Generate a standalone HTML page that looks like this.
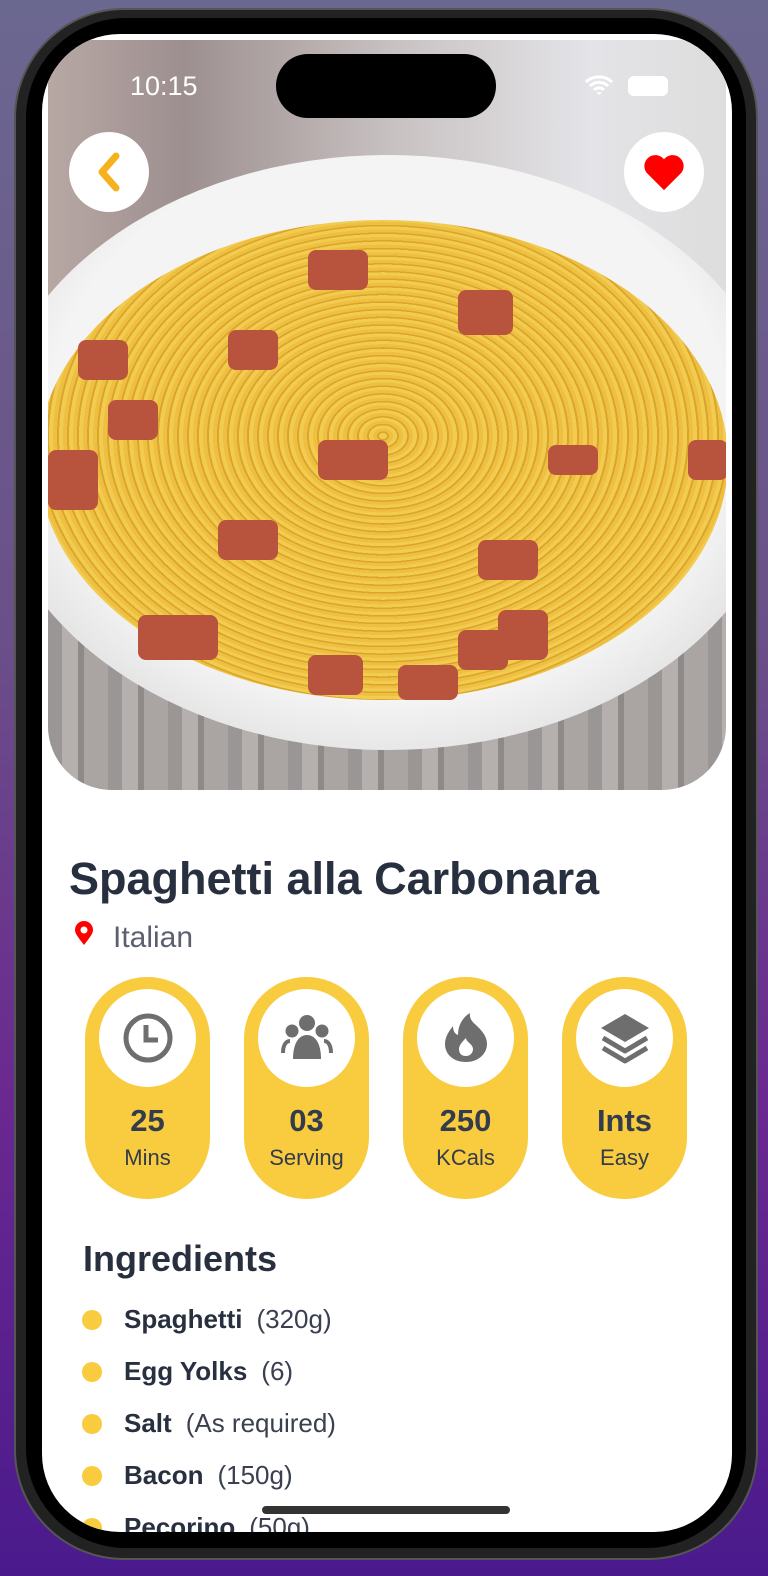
<!DOCTYPE html>
<html><head><style>
*{margin:0;padding:0;box-sizing:border-box}
body{width:768px;height:1576px;overflow:hidden;background:linear-gradient(180deg,#6b6890 0%,#6a5088 40%,#6a2890 70%,#4a1a8c 100%);font-family:"Liberation Sans",sans-serif;position:relative}
.frame{position:absolute;left:14px;top:8px;width:744px;height:1552px;border-radius:110px;background:#222;border:2px solid #555}
.bezel{position:absolute;left:26px;top:18px;width:720px;height:1530px;border-radius:100px;background:#000}
.screen{position:absolute;left:42px;top:34px;width:690px;height:1498px;border-radius:78px;background:#fff;overflow:hidden}
.photo{position:absolute;left:6px;top:6px;width:678px;height:750px;border-radius:0 0 64px 64px;overflow:hidden;
background:linear-gradient(90deg,#b8a8a4 0%,#9d8f90 20%,#c7c0c0 50%,#e4e4e8 80%,#ddd 100%)}
.wood{position:absolute;left:0;top:560px;width:100%;height:200px;background:repeating-linear-gradient(90deg,#9b9696 0 14px,#b5b0ae 14px 30px,#8e8a8a 30px 36px,#aaa5a3 36px 60px)}
.plate{position:absolute;left:-60px;top:115px;width:800px;height:595px;border-radius:50%;background:radial-gradient(ellipse at 50% 45%,#f4f4f4 60%,#dcdcdc 80%,#c8c8c8 100%)}
.pasta{position:absolute;left:-10px;top:180px;width:690px;height:480px;border-radius:50%;background:repeating-radial-gradient(ellipse at 50% 45%,#f2cc50 0 4px,#dba52c 4px 6px,#eebf40 6px 10px)}
.b{position:absolute;border-radius:8px;background:#b8533e}
.status{position:absolute;top:37px;left:88px;color:#fff;font-size:27px}
.island{position:absolute;left:234px;top:20px;width:220px;height:64px;border-radius:32px;background:#000}
.btn{position:absolute;top:98px;width:80px;height:80px;border-radius:50%;background:#fff;display:flex;align-items:center;justify-content:center}
h1{position:absolute;left:27px;top:819px;font-size:45px;font-weight:bold;color:#283040}
.loc{position:absolute;left:71px;top:887px;font-size:30px;color:#5a6070}
.pill{position:absolute;top:943px;width:125px;height:222px;border-radius:62px;background:#f9cb3e;text-align:center;color:#333c4c}
.circ{width:97px;height:98px;border-radius:50%;background:#fff;margin:12px auto 0;display:flex;align-items:center;justify-content:center}
.num{font-size:31px;font-weight:bold;margin-top:16px}
.lab{font-size:22px;margin-top:6px}
h2{position:absolute;left:41px;top:1204px;font-size:36px;font-weight:bold;color:#283040}
.ing{position:absolute;left:40px;font-size:26px;color:#283040}
.ing:before{content:"";position:absolute;left:0;top:6px;width:20px;height:20px;border-radius:50%;background:#f9cb3e}
.ing b{margin-left:42px;margin-right:14px}
.ing span{color:#3a4050}
.home{position:absolute;left:220px;top:1472px;width:248px;height:8px;border-radius:4px;background:#333}
</style></head><body>
<div class="frame"></div><div class="bezel"></div>
<div class="screen">
 <div class="photo">
  <div class="wood"></div>
  <div class="plate"></div>
  <div class="pasta"></div>
  <div class="b" style="left:30px;top:300px;width:50px;height:40px"></div>
  <div class="b" style="left:60px;top:360px;width:50px;height:40px"></div>
  <div class="b" style="left:0px;top:410px;width:50px;height:60px"></div>
  <div class="b" style="left:170px;top:480px;width:60px;height:40px"></div>
  <div class="b" style="left:90px;top:575px;width:80px;height:45px"></div>
  <div class="b" style="left:260px;top:210px;width:60px;height:40px"></div>
  <div class="b" style="left:180px;top:290px;width:50px;height:40px"></div>
  <div class="b" style="left:270px;top:400px;width:70px;height:40px"></div>
  <div class="b" style="left:430px;top:500px;width:60px;height:40px"></div>
  <div class="b" style="left:450px;top:570px;width:50px;height:50px"></div>
  <div class="b" style="left:350px;top:625px;width:60px;height:35px"></div>
  <div class="b" style="left:260px;top:615px;width:55px;height:40px"></div>
  <div class="b" style="left:410px;top:250px;width:55px;height:45px"></div>
  <div class="b" style="left:500px;top:405px;width:50px;height:30px"></div>
  <div class="b" style="left:640px;top:400px;width:40px;height:40px"></div>
  <div class="b" style="left:410px;top:590px;width:50px;height:40px"></div>
 </div>
 <div class="status">10:15</div>
 <div class="island"></div>
 <svg style="position:absolute;left:542px;top:40px" width="30" height="22" viewBox="0 0 30 22"><path d="M2 8a19 19 0 0 1 26 0M6 12a13 13 0 0 1 18 0M10 16a7 7 0 0 1 10 0" stroke="#fff" stroke-width="3" fill="none"/><path d="M12 18l3 3 3-3z" fill="#fff"/></svg>
 <div style="position:absolute;left:586px;top:42px;width:40px;height:20px;border-radius:6px;background:#fff"></div>
 <div class="btn" style="left:27px"><svg width="30" height="44" viewBox="0 0 30 44"><path d="M22 6L8 22l14 16" stroke="#f6b21c" stroke-width="7" fill="none" stroke-linecap="round" stroke-linejoin="round"/></svg></div>
 <div class="btn" style="left:582px"><svg width="44" height="40" viewBox="0 0 24 22"><path d="M12 21L2.5 11.5A5.5 5.5 0 0 1 12 4a5.5 5.5 0 0 1 9.5 7.5z" fill="#f00"/></svg></div>
 <h1>Spaghetti alla Carbonara</h1>
 <svg style="position:absolute;left:31px;top:886px" width="22" height="26" viewBox="0 0 22 26"><path d="M11 25C4 16 2 13 2 10a9 9 0 0 1 18 0c0 3-2 6-9 15z" fill="#f00"/><circle cx="11" cy="10" r="3.5" fill="#fff"/></svg>
 <div class="loc">Italian</div>
 <div class="pill" style="left:43px"><div class="circ"><svg width="52" height="52" viewBox="0 0 52 52"><circle cx="26" cy="26" r="22" stroke="#6e6e6e" stroke-width="5" fill="none"/><path d="M24 13v15h12" stroke="#6e6e6e" stroke-width="5" fill="none"/></svg></div><div class="num">25</div><div class="lab">Mins</div></div>
 <div class="pill" style="left:202px"><div class="circ"><svg width="54" height="50" viewBox="0 0 54 50"><circle cx="27" cy="10" r="8" fill="#6e6e6e"/><circle cx="12" cy="18" r="6.5" fill="#6e6e6e"/><circle cx="42" cy="18" r="6.5" fill="#6e6e6e"/><path d="M13 46c0-16 6-24 14-24s14 8 14 24z" fill="#6e6e6e"/><path d="M3 40c0-8 3-12 7-12M51 40c0-8-3-12-7-12" stroke="#6e6e6e" stroke-width="4" fill="none"/></svg></div><div class="num">03</div><div class="lab">Serving</div></div>
 <div class="pill" style="left:361px"><div class="circ"><svg width="46" height="52" viewBox="0 0 46 52"><path d="M23 50C10 50 2 42 2 32c0-8 5-14 8-18 0 5 2 8 5 9 0-10 5-18 12-22-1 7 4 10 8 14 5 5 9 10 9 17 0 10-9 18-21 18z" fill="#6e6e6e"/><path d="M23 44c-5 0-7-3-7-7 0-4 4-8 7-11 0 4 7 6 7 11 0 4-3 7-7 7z" fill="#fff"/></svg></div><div class="num">250</div><div class="lab">KCals</div></div>
 <div class="pill" style="left:520px"><div class="circ"><svg width="52" height="52" viewBox="0 0 52 52"><path d="M26 2L50 16 26 30 2 16z" fill="#6e6e6e"/><path d="M4 26l22 13 22-13M4 36l22 13 22-13" stroke="#6e6e6e" stroke-width="5" fill="none" stroke-linejoin="round"/></svg></div><div class="num">Ints</div><div class="lab">Easy</div></div>
 <h2>Ingredients</h2>
 <div class="ing" style="top:1270px"><b>Spaghetti</b><span>(320g)</span></div>
 <div class="ing" style="top:1322px"><b>Egg Yolks</b><span>(6)</span></div>
 <div class="ing" style="top:1374px"><b>Salt</b><span>(As required)</span></div>
 <div class="ing" style="top:1426px"><b>Bacon</b><span>(150g)</span></div>
 <div class="ing" style="top:1478px"><b>Pecorino</b><span>(50g)</span></div>
 <div class="home"></div>
</div>
</body></html>
